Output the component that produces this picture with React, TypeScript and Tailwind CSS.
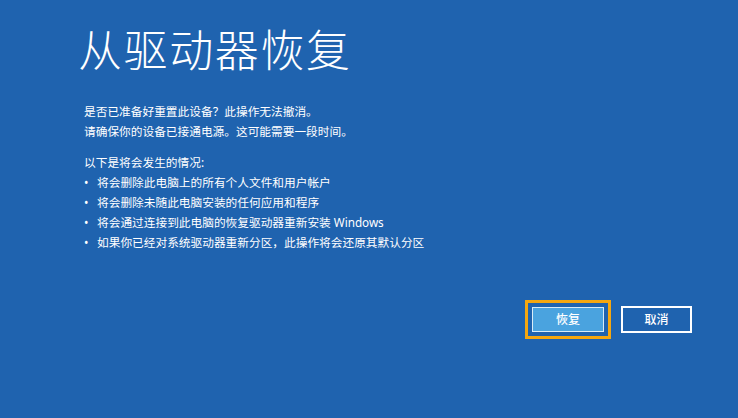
import React from "react";

export default function App() {
  const bullets = [
    "将会删除此电脑上的所有个人文件和用户帐户",
    "将会删除未随此电脑安装的任何应用和程序",
    "将会通过连接到此电脑的恢复驱动器重新安装 Windows",
    "如果你已经对系统驱动器重新分区，此操作将会还原其默认分区",
  ];
  return (
    <div
      className="w-[738px] h-[418px] bg-[#1f63af] text-white flex flex-col overflow-hidden"
      style={{ fontFamily: '"Noto Sans", "Noto Sans CJK SC", sans-serif' }}
    >
      <div className="pl-[78px] pt-[22px] text-[44px] leading-[56px] font-light tracking-[1.6px]">
        从驱动器恢复
      </div>
      <div className="pl-[84px] pt-[23px] text-[11.7px] leading-[20px]">
        <div>是否已准备好重置此设备？此操作无法撤消。</div>
        <div>请确保你的设备已接通电源。这可能需要一段时间。</div>
        <div className="mt-[11px]">以下是将会发生的情况:</div>
        <ul className="flex flex-col">
          {bullets.map((b) => (
            <li key={b} className="flex items-center h-[20px]">
              <span className="w-[13px] flex-none">•</span>
              <span>{b}</span>
            </li>
          ))}
        </ul>
      </div>
      <div className="flex justify-end items-center gap-[10px] pr-[46px] mt-[48px]">
        <div className="border-[3px] border-[#f5a70f] p-[4px]">
          <button className="w-[72px] h-[25px] bg-[#4aa3df] border border-[#d8ecf8] text-[12px] font-medium text-white flex items-center justify-center">
            恢复
          </button>
        </div>
        <button className="w-[71px] h-[27px] border-2 border-white text-[12px] font-medium text-white flex items-center justify-center">
          取消
        </button>
      </div>
    </div>
  );
}
